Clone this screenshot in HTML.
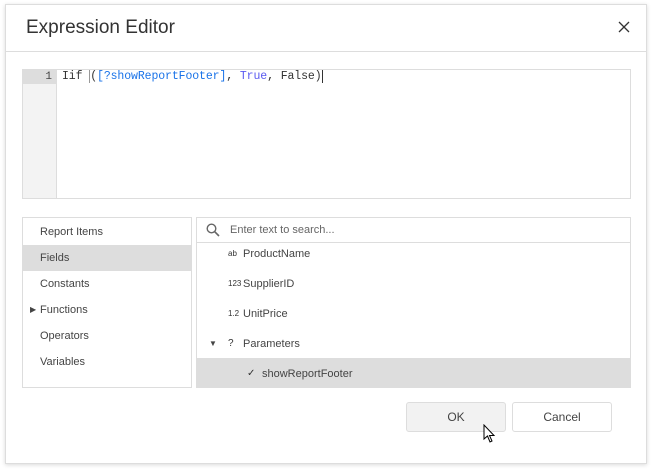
<!DOCTYPE html>
<html><head><style>
*{box-sizing:border-box;margin:0;padding:0}
body{width:653px;height:471px;background:#fff;font-family:"Segoe UI","Liberation Sans",sans-serif;position:relative;overflow:hidden;color:#444}
.dlg{position:absolute;left:5px;top:4px;width:642px;height:460px;border:1px solid #ddd;box-shadow:0 1px 4px rgba(0,0,0,.15);background:#fff}
.hdr{position:absolute;left:0;top:0;width:100%;height:47px;border-bottom:1px solid #ddd}
.title{position:absolute;left:20px;top:12px;font-size:19px;color:#333}
.x{position:absolute;left:612px;top:16px}
.ed{position:absolute;left:22px;top:69px;width:609px;height:130px;border:1px solid #ddd}
.gut{position:absolute;left:0;top:0;width:34px;height:100%;background:#f3f3f3;border-right:1px solid #ddd}
.ln{position:absolute;left:0;top:0;width:34px;height:14px;background:#ddd;font:11px "Liberation Mono",monospace;text-align:right;padding-right:5px;line-height:14px}
.code{position:absolute;left:39px;top:0;font:11.5px "Liberation Mono",monospace;line-height:14px;white-space:pre;color:#333;letter-spacing:-0.1px}
.lst{position:absolute;left:22px;top:217px;width:170px;height:171px;border:1px solid #ddd;font-size:11px;padding-top:1px}
.li{height:26px;line-height:26px;padding-left:17px}
.sel{background:#ddd}
.rp{position:absolute;left:196px;top:217px;width:435px;height:171px;border:1px solid #ddd;font-size:11px;overflow:hidden}
.srch{height:25px;border-bottom:1px solid #ddd;line-height:24px;padding-left:33px;color:#666;position:relative}
.ri{height:30px;line-height:30px;position:relative;padding-left:46px}
.ic{position:absolute;left:31px;font-size:8px;color:#333}
.btn{position:absolute;top:402px;width:100px;height:30px;border:1px solid #ddd;border-radius:3px;font-size:12px;text-align:center;line-height:28px}
</style></head><body>
<div class="dlg">
<div class="hdr"><div class="title">Expression Editor</div><svg class="x" width="12" height="12" viewBox="0 0 12 12"><path d="M1 1L11 11M11 1L1 11" stroke="#333" stroke-width="1.3"/></svg></div>
</div>
<div class="ed"><div class="gut"><div class="ln">1</div></div>
<div class="code">Iif <span style="border-left:1px solid #999">(</span><span style="color:#1a73e8">[?showReportFooter]</span>, <span style="color:#5a5af0">True</span>, False)<span style="border-left:1px solid #333"></span></div></div>
<div class="lst">
<div class="li">Report Items</div><div class="li sel">Fields</div><div class="li">Constants</div>
<div class="li" style="position:relative"><span style="position:absolute;left:7px;font-size:8px">▶</span>Functions</div>
<div class="li">Operators</div><div class="li">Variables</div></div>
<div class="rp">
<div class="srch"><svg style="position:absolute;left:9px;top:5px" width="14" height="14" viewBox="0 0 14 14"><circle cx="5.5" cy="5.5" r="4.3" fill="none" stroke="#666" stroke-width="1.4"/><path d="M8.7 8.7L13 13" stroke="#666" stroke-width="1.6"/></svg>Enter text to search...</div>
<div class="ri" style="margin-top:-4px"><span class="ic">ab</span>ProductName</div>
<div class="ri"><span class="ic">123</span>SupplierID</div>
<div class="ri"><span class="ic">1.2</span>UnitPrice</div>
<div class="ri"><span style="position:absolute;left:12px;font-size:8px">▼</span><span class="ic" style="font-size:10px">?</span>Parameters</div>
<div class="ri sel" style="padding-left:65px;margin-top:-1px;height:32px;line-height:32px"><span class="ic" style="left:50px;font-size:10px">✓</span>showReportFooter</div>
</div>
<div class="btn" style="left:406px;background:#f2f2f2">OK</div>
<div class="btn" style="left:512px">Cancel</div>
<svg style="position:absolute;left:483px;top:424px" width="13" height="20" viewBox="0 0 13 20"><path d="M1 1L1 15L4.5 12L7 18L9 17L6.5 11.5L11 11.5Z" fill="#fff" stroke="#000" stroke-width="1"/></svg>
</body></html>
